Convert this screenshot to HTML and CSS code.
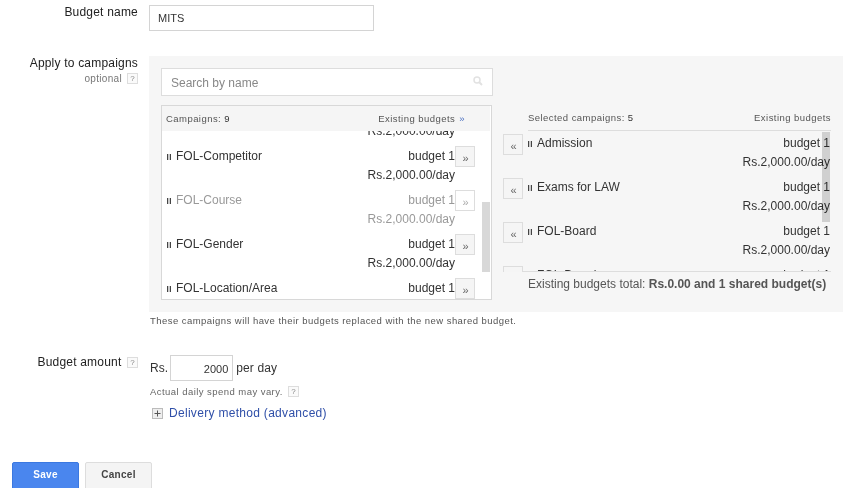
FILE: index.html
```html
<!DOCTYPE html>
<html lang="en">
<head>
<meta charset="utf-8">
<title>Budget</title>
<link rel="stylesheet" href="styles.css">
</head>
<body>
<main class="form">
  <div class="form-row name-row">
    <div class="label">Budget name</div>
    <div class="field"><input class="name-input" type="text" value="MITS"></div>
  </div>

  <div class="form-row apply-row">
    <div class="label">
      <div class="label-compact">Apply to campaigns</div>
      <div class="optional">optional <span class="help">?</span></div>
    </div>
    <div class="field">
      <section class="panel">
        <div class="left-col">
          <div class="search"><span>Search by name</span>
            <svg class="search-icon" width="10" height="10" viewBox="0 0 10 10"><circle cx="4" cy="4" r="3" fill="none" stroke="#e2e2e2" stroke-width="1.5"/><path d="M6.3 6.3 9 9" stroke="#e2e2e2" stroke-width="2"/></svg>
          </div>
          <div class="list-box">
            <div class="list-head">
              <span>Campaigns: <b>9</b></span>
              <span class="head-right">Existing budgets <i class="blue">»</i></span>
            </div>
            <div class="viewport left-view">
              <div class="rows left-rows">
                <div class="row"><div class="row-name"><span class="pause"></span>FOL-Sample</div><div class="row-budget"><div>budget 1</div><div>Rs.2,000.00/day</div></div><button class="mv">»</button></div>
                <div class="row"><div class="row-name"><span class="pause"></span>FOL-Competitor</div><div class="row-budget"><div>budget 1</div><div>Rs.2,000.00/day</div></div><button class="mv">»</button></div>
                <div class="row off"><div class="row-name"><span class="pause"></span>FOL-Course</div><div class="row-budget"><div>budget 1</div><div>Rs.2,000.00/day</div></div><button class="mv">»</button></div>
                <div class="row"><div class="row-name"><span class="pause"></span>FOL-Gender</div><div class="row-budget"><div>budget 1</div><div>Rs.2,000.00/day</div></div><button class="mv">»</button></div>
                <div class="row"><div class="row-name"><span class="pause"></span>FOL-Location/Area</div><div class="row-budget"><div>budget 1</div><div>Rs.2,000.00/day</div></div><button class="mv">»</button></div>
              </div>
              <div class="thumb left-thumb"></div>
            </div>
          </div>
        </div>
        <div class="right-col">
          <div class="sel-head">
            <span>Selected campaigns: <b>5</b></span>
            <span>Existing budgets</span>
          </div>
          <div class="viewport right-view">
            <div class="rows right-rows">
              <div class="row"><button class="mv">«</button><div class="row-name"><span class="pause"></span>Admission</div><div class="row-budget"><div>budget 1</div><div>Rs.2,000.00/day</div></div></div>
              <div class="row"><button class="mv">«</button><div class="row-name"><span class="pause"></span>Exams for LAW</div><div class="row-budget"><div>budget 1</div><div>Rs.2,000.00/day</div></div></div>
              <div class="row"><button class="mv">«</button><div class="row-name"><span class="pause"></span>FOL-Board</div><div class="row-budget"><div>budget 1</div><div>Rs.2,000.00/day</div></div></div>
              <div class="row"><button class="mv">«</button><div class="row-name"><span class="pause"></span>FOL-Board</div><div class="row-budget"><div>budget 1</div><div>Rs.2,000.00/day</div></div></div>
            </div>
            <div class="thumb right-thumb"></div>
          </div>
          <div class="total">Existing budgets total: <b>Rs.0.00 and 1 shared budget(s)</b></div>
        </div>
      </section>
      <p class="note">These campaigns will have their budgets replaced with the new shared budget.</p>
    </div>
  </div>

  <div class="form-row amount-row">
    <div class="label">Budget amount <span class="help">?</span></div>
    <div class="field">
      <div class="amount-line">Rs. <input class="amount-input" type="text" value="2000"> per day</div>
      <div class="vary">Actual daily spend may vary. <span class="help">?</span></div>
      <div class="delivery">
        <svg class="plus" width="11" height="11" viewBox="0 0 11 11"><rect x=".5" y=".5" width="10" height="10" fill="#eee" stroke="#bbb"/><path d="M2.5 5.5h6M5.5 2.5v6" stroke="#555"/></svg>
        <a href="#">Delivery method (advanced)</a>
      </div>
    </div>
  </div>

  <div class="actions">
    <button class="btn save">Save</button>
    <button class="btn cancel">Cancel</button>
  </div>
</main>
</body>
</html>
```
FILE: styles.css
```css
* { box-sizing: border-box; }
html, body { margin: 0; height: 504px; overflow: hidden; background: #fff; }
body { font-family: "Liberation Sans", Arial, sans-serif; font-size: 12px; color: #333; }
.form { height: 488px; overflow: hidden; }
.form-row { display: grid; grid-template-columns: 138px 694px; column-gap: 11px; }
.name-row { padding-top: 5px; height: 56px; }
.label { text-align: right; color: #222; line-height: 14px; letter-spacing: .2px; }
.name-input { display: block; width: 225px; height: 26px; border: 1px solid #d4d4d4; padding: 0 8px; font: 11px "Liberation Sans", Arial, sans-serif; color: #333; outline: 0; }
.optional { font-size: 10px; color: #777; margin-top: 2px; letter-spacing: .3px; }
.help { display: inline-block; width: 11px; height: 11px; margin-left: 2px; border: 1px solid #ddd; background: #fafafa; color: #888; font-size: 8px; line-height: 9px; text-align: center; letter-spacing: 0; vertical-align: 1px; }
.panel { display: flex; height: 256px; background: #f6f6f6; padding: 12px 12px 0 12px; }
.left-col { width: 332px; }
.search { display: flex; align-items: center; justify-content: space-between; height: 28px; background: #fff; border: 1px solid #ddd; padding: 2px 9px 0; color: #888; }
.search-icon { display: block; margin-top: -4px; }
.list-box { width: 331px; height: 195px; margin-top: 9px; background: #fff; border: 1px solid #d8d8d8; }
.list-head { display: flex; justify-content: space-between; height: 25px; padding: 0 9px 0 4px; background: #f5f5f5; align-items: center; font-size: 9.5px; color: #555; letter-spacing: .45px; margin-right: 1px; }
.list-head b, .sel-head b { font-weight: normal; color: #333; }
.head-right { margin-right: 16px; }
.blue { color: #4a6fc0; font-style: normal; margin-left: 1px; }
.viewport { position: relative; overflow: hidden; }
.left-view { height: 168px; }
.rows { display: flex; flex-direction: column; }
.left-rows { margin-top: -31px; }
.row { display: flex; height: 44px; flex: none; line-height: 19px; padding-top: 3px; }
.left-rows .row { padding-left: 5px; padding-right: 16px; }
.row-name { flex: 1; color: #333; white-space: nowrap; }
.row-budget { text-align: right; color: #333; }
.off .row-name, .off .row-budget { color: #999; }
.off .mv { color: #aaa; background: #fff; }
.pause { display: inline-block; width: 4px; height: 6px; margin-right: 5px; border-left: 1px solid #444; border-right: 1px solid #444; background: #ccc; }
.mv { width: 20px; height: 21px; padding: 3px 0 0 1px; margin-top: -1px; border: 1px solid #ddd; background: #f5f5f5; color: #666; font: 11px "Liberation Sans", Arial, sans-serif; line-height: 14px; flex: none; }
.thumb { position: absolute; width: 8px; background: #d8d8d8; }
.left-thumb { right: 1px; top: 71px; height: 70px; }
.right-col { flex: 1; margin-left: 10px; }
.sel-head { display: flex; justify-content: space-between; height: 26px; margin-top: 37px; margin-left: 25px; align-items: center; font-size: 9.5px; color: #555; letter-spacing: .45px; border-bottom: 1px solid #ddd; }
.right-view { height: 141px; }
.right-view::after { content: ""; position: absolute; left: 20px; right: 0; bottom: 0; height: 1px; background: #ddd; }
.right-rows .row { padding-right: 1px; }
.right-rows .mv { margin-top: 0; margin-right: 5px; }
.right-thumb { right: 1px; top: 1px; height: 90px; mix-blend-mode: multiply; }
.total { margin-left: 25px; padding-top: 4px; color: #555; line-height: 16px; }
.note { margin: 3px 0 0 1px; font-size: 9.5px; color: #555; letter-spacing: .45px; }
.apply-row { height: 299px; }
.amount-row { height: 107px; }
.amount-line { display: flex; align-items: center; gap: 2px; height: 26px; padding-left: 1px; color: #333; letter-spacing: .1px; }
.amount-input { width: 63px; height: 26px; margin-right: 1px; border: 1px solid #d4d4d4; padding: 2px 4px 0 0; text-align: right; font: 11px "Liberation Sans", Arial, sans-serif; color: #333; }
.vary { margin: 5px 0 0 1px; font-size: 9.5px; color: #666; letter-spacing: .45px; }
.delivery { display: flex; align-items: center; gap: 6px; margin: 9px 0 0 3px; }
.delivery a { color: #2f4fa8; text-decoration: none; letter-spacing: .3px; }
.actions { display: flex; gap: 6px; padding-left: 12px; }
.btn { width: 67px; height: 30px; border-radius: 2px; font: bold 10px "Liberation Sans", Arial, sans-serif; padding: 0 0 6px; letter-spacing: .3px; }
.save { background: #4a86ee; border: 1px solid #3b78e0; color: #fff; }
.cancel { background: #f4f4f4; border: 1px solid #ddd; color: #444; }
```
